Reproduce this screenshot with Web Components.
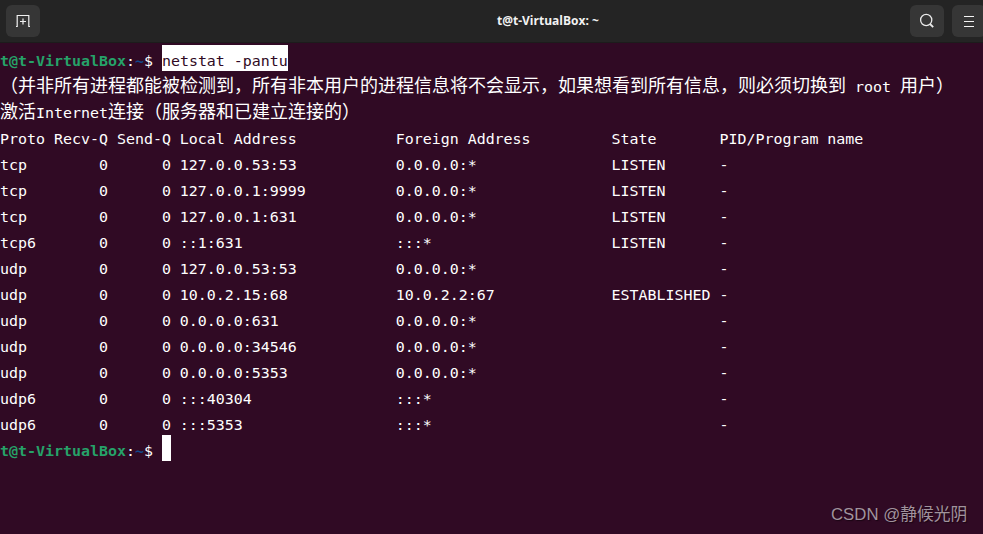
<!DOCTYPE html>
<html>
<head>
<meta charset="utf-8">
<title>t@t-VirtualBox: ~</title>
<style>
  html, body { margin: 0; height: 100%; background: #300a24; overflow: hidden; }
</style>
</head>
<body>
<term-window title-text="t@t-VirtualBox: ~">
  <term-prompt><term-select>netstat -pantu</term-select></term-prompt>
  <term-line><term-cjk>（并非所有进程都能被检测到，所有非本用户的进程信息将不会显示，如果想看到所有信息，则必须切换到</term-cjk> root <term-cjk>用户）</term-cjk></term-line>
  <term-line><term-cjk>激活</term-cjk>Internet<term-cjk>连接（服务器和已建立连接的）</term-cjk></term-line>
  <term-line>Proto Recv-Q Send-Q Local Address           Foreign Address         State       PID/Program name</term-line>
  <term-line>tcp        0      0 127.0.0.53:53           0.0.0.0:*               LISTEN      -</term-line>
  <term-line>tcp        0      0 127.0.0.1:9999          0.0.0.0:*               LISTEN      -</term-line>
  <term-line>tcp        0      0 127.0.0.1:631           0.0.0.0:*               LISTEN      -</term-line>
  <term-line>tcp6       0      0 ::1:631                 :::*                    LISTEN      -</term-line>
  <term-line>udp        0      0 127.0.0.53:53           0.0.0.0:*                           -</term-line>
  <term-line>udp        0      0 10.0.2.15:68            10.0.2.2:67             ESTABLISHED -</term-line>
  <term-line>udp        0      0 0.0.0.0:631             0.0.0.0:*                           -</term-line>
  <term-line>udp        0      0 0.0.0.0:34546           0.0.0.0:*                           -</term-line>
  <term-line>udp        0      0 0.0.0.0:5353            0.0.0.0:*                           -</term-line>
  <term-line>udp6       0      0 :::40304                :::*                                -</term-line>
  <term-line>udp6       0      0 :::5353                 :::*                                -</term-line>
  <term-prompt cursor></term-prompt>
</term-window>
<script>
class HeaderButton extends HTMLElement {
  constructor() {
    super();
    this.attachShadow({mode: 'open'}).innerHTML = `
      <style>
        :host { display: flex; width: 34px; height: 32px; flex: none; align-items: center; justify-content: center;
          background: #363636; border-radius: 6px; }
      </style>
      <slot></slot>`;
  }
}
customElements.define('header-button', HeaderButton);

class TermWindow extends HTMLElement {
  constructor() {
    super();
    this.attachShadow({mode: 'open'}).innerHTML = `
      <style>
        :host { display: flex; flex-direction: column; width: 983px; height: 534px; position: relative; overflow: hidden;
          background: #300a24; color: #fff; }
        header { display: flex; flex: none; align-items: center; height: 42px; padding-left: 6px; box-sizing: border-box;
          margin-bottom: 1px; background: #242424; box-shadow: 0 1px 0 #1c1c1c; }
        h1 { flex: none; width: 870px; margin: 0 0 2px; padding-left: 457px; box-sizing: border-box; color: #f2f2f2; white-space: nowrap;
          font: bold 12px "Open Sans", sans-serif; }
        .right { display: flex; flex: none; gap: 8px; }
        main { flex: 1; padding-top: 2px; }
        .mark { position: absolute; left: 831px; top: 501px; color: #a1939d; font: 16.8px "Liberation Sans", "Noto Sans CJK SC", sans-serif;
          text-shadow: 1px 1px 1px #1a0514; white-space: nowrap; }
      </style>
      <header>
        <header-button>
          <svg width="16" height="16" viewBox="0 0 16 16" fill="none" stroke="#f0f0f0" stroke-width="1.2">
            <path d="M1 13.5h1.2V2.5h11.6v11H15"/><path d="M8 5.5v6M5 8.5h6"/>
          </svg>
        </header-button>
        <h1 id="title"></h1>
        <div class="right">
          <header-button>
            <svg width="16" height="16" viewBox="0 0 16 16" fill="none" stroke="#eaeaea" stroke-width="1.3">
              <circle cx="7.2" cy="7" r="5.6"/><path d="M11 11l3.2 3.2" stroke-width="1.8"/>
            </svg>
          </header-button>
          <header-button>
            <svg width="16" height="16" viewBox="0 0 16 16" stroke="#f4f4f4" stroke-width="1.2">
              <path d="M3 3.5h10M3 8.5h10M3 13.5h10"/>
            </svg>
          </header-button>
        </div>
      </header>
      <main><slot></slot></main>
      <div class="mark">CSDN @静候光阴</div>`;
  }
  connectedCallback() {
    this.shadowRoot.getElementById('title').textContent = this.getAttribute('title-text');
  }
}
customElements.define('term-window', TermWindow);

// one terminal row: 9px cell, 26px row; the taller line-height drops the glyphs to where the reference has them
const lineStyle = `:host { display: block; height: 26px; line-height: 32px; white-space: pre; font-family: "DejaVu Sans Mono", monospace; font-size: 14.95px; color: #fff; }`;

// these rows are white-space: pre, so no whitespace may stand in their shadow markup
class TermLine extends HTMLElement {
  constructor() {
    super();
    this.attachShadow({mode: 'open'}).innerHTML = `<style>${lineStyle}</style><slot></slot>`;
  }
}
customElements.define('term-line', TermLine);

// wide cells: two columns per character, line-height 0 keeps the row's baseline
class TermCjk extends HTMLElement {
  constructor() {
    super();
    this.attachShadow({mode: 'open'}).innerHTML = `<style>:host { display: inline; line-height: 0; font-family: "Noto Sans CJK SC", sans-serif; font-size: 18px; }</style><slot></slot>`;
  }
}
customElements.define('term-cjk', TermCjk);

class TermSelect extends HTMLElement {
  constructor() {
    super();
    this.attachShadow({mode: 'open'}).innerHTML = `<style>:host { display: block; height: 26px; background: #fff; color: #300a24; }</style><slot></slot>`;
  }
}
customElements.define('term-select', TermSelect);

class TermPrompt extends HTMLElement {
  constructor() {
    super();
    this.attachShadow({mode: 'open'}).innerHTML = `<style>${lineStyle}
        :host { display: flex; }
        b { color: #26a269; }
        i { color: #12488b; font-weight: bold; font-style: normal; }
        u { display: none; width: 9px; height: 26px; background: #fff; }
        :host([cursor]) u { display: block; }
      </style><b>t@t-VirtualBox</b>:<i>~</i>$ <slot></slot><u></u>`;
  }
}
customElements.define('term-prompt', TermPrompt);
</script>
</body>
</html>
